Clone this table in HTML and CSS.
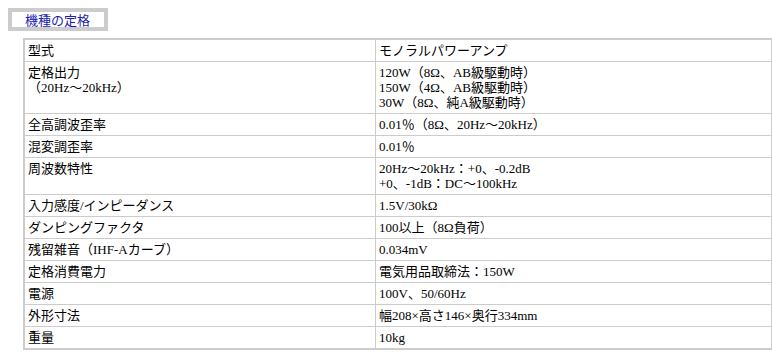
FILE: index.html
```html
<!DOCTYPE html>
<html lang="ja">
<head>
<meta charset="utf-8">
<title>機種の定格</title>
<link rel="stylesheet" href="styles.css">
</head>
<body>
<div class="title-box"><span class="title-text">機種の定格</span></div>
<table class="spec">
  <tr><td class="k">型式</td><td class="v">モノラルパワーアンプ</td></tr>
  <tr><td class="k">定格出力<br>（20Hz〜20kHz）</td><td class="v">120W（8Ω、AB級駆動時）<br>150W（4Ω、AB級駆動時）<br>30W（8Ω、純A級駆動時）</td></tr>
  <tr><td class="k">全高調波歪率</td><td class="v">0.01％（8Ω、20Hz〜20kHz）</td></tr>
  <tr><td class="k">混変調歪率</td><td class="v">0.01％</td></tr>
  <tr><td class="k">周波数特性</td><td class="v">20Hz〜20kHz：+0、-0.2dB<br>+0、-1dB：DC〜100kHz</td></tr>
  <tr><td class="k">入力感度/インピーダンス</td><td class="v">1.5V/30kΩ</td></tr>
  <tr><td class="k">ダンピングファクタ</td><td class="v">100以上（8Ω負荷）</td></tr>
  <tr><td class="k">残留雑音（IHF-Aカーブ）</td><td class="v">0.034mV</td></tr>
  <tr><td class="k">定格消費電力</td><td class="v">電気用品取締法：150W</td></tr>
  <tr><td class="k">電源</td><td class="v">100V、50/60Hz</td></tr>
  <tr><td class="k">外形寸法</td><td class="v">幅208×高さ146×奥行334mm</td></tr>
  <tr><td class="k">重量</td><td class="v">10kg</td></tr>
</table>
</body>
</html>
```

FILE: styles.css
```css
html, body {
  margin: 0;
  padding: 0;
  background: #fff;
}
body {
  padding: 8px 0 0 8px;
  font-family: "Liberation Serif", "Noto Sans CJK JP", serif;
  font-size: 13px;
  line-height: 15px;
  color: #000;
  font-feature-settings: "pkna";
}
.title-box {
  box-sizing: border-box;
  width: 100px;
  height: 23px;
  border: 4px solid #cccccc;
  padding-left: 13px;
  background: #fff;
  display: flex;
  align-items: center;
}
.title-text {
  color: #1c1cb0;
  font-family: "Noto Sans CJK JP", sans-serif;
  font-size: 13px;
  line-height: 15px;
  font-feature-settings: normal;
}
.spec {
  margin: 7px 0 0 15px;
  width: 749px;
  border-collapse: collapse;
  border: 2px solid #cccccc;
  border-right-width: 1px;
  table-layout: fixed;
}
.spec td {
  border: 1px solid #cccccc;
  padding: 3px 4px 3px 3px;
  vertical-align: top;
  text-align: left;
}
.spec td.k {
  width: 343px;
}
```
